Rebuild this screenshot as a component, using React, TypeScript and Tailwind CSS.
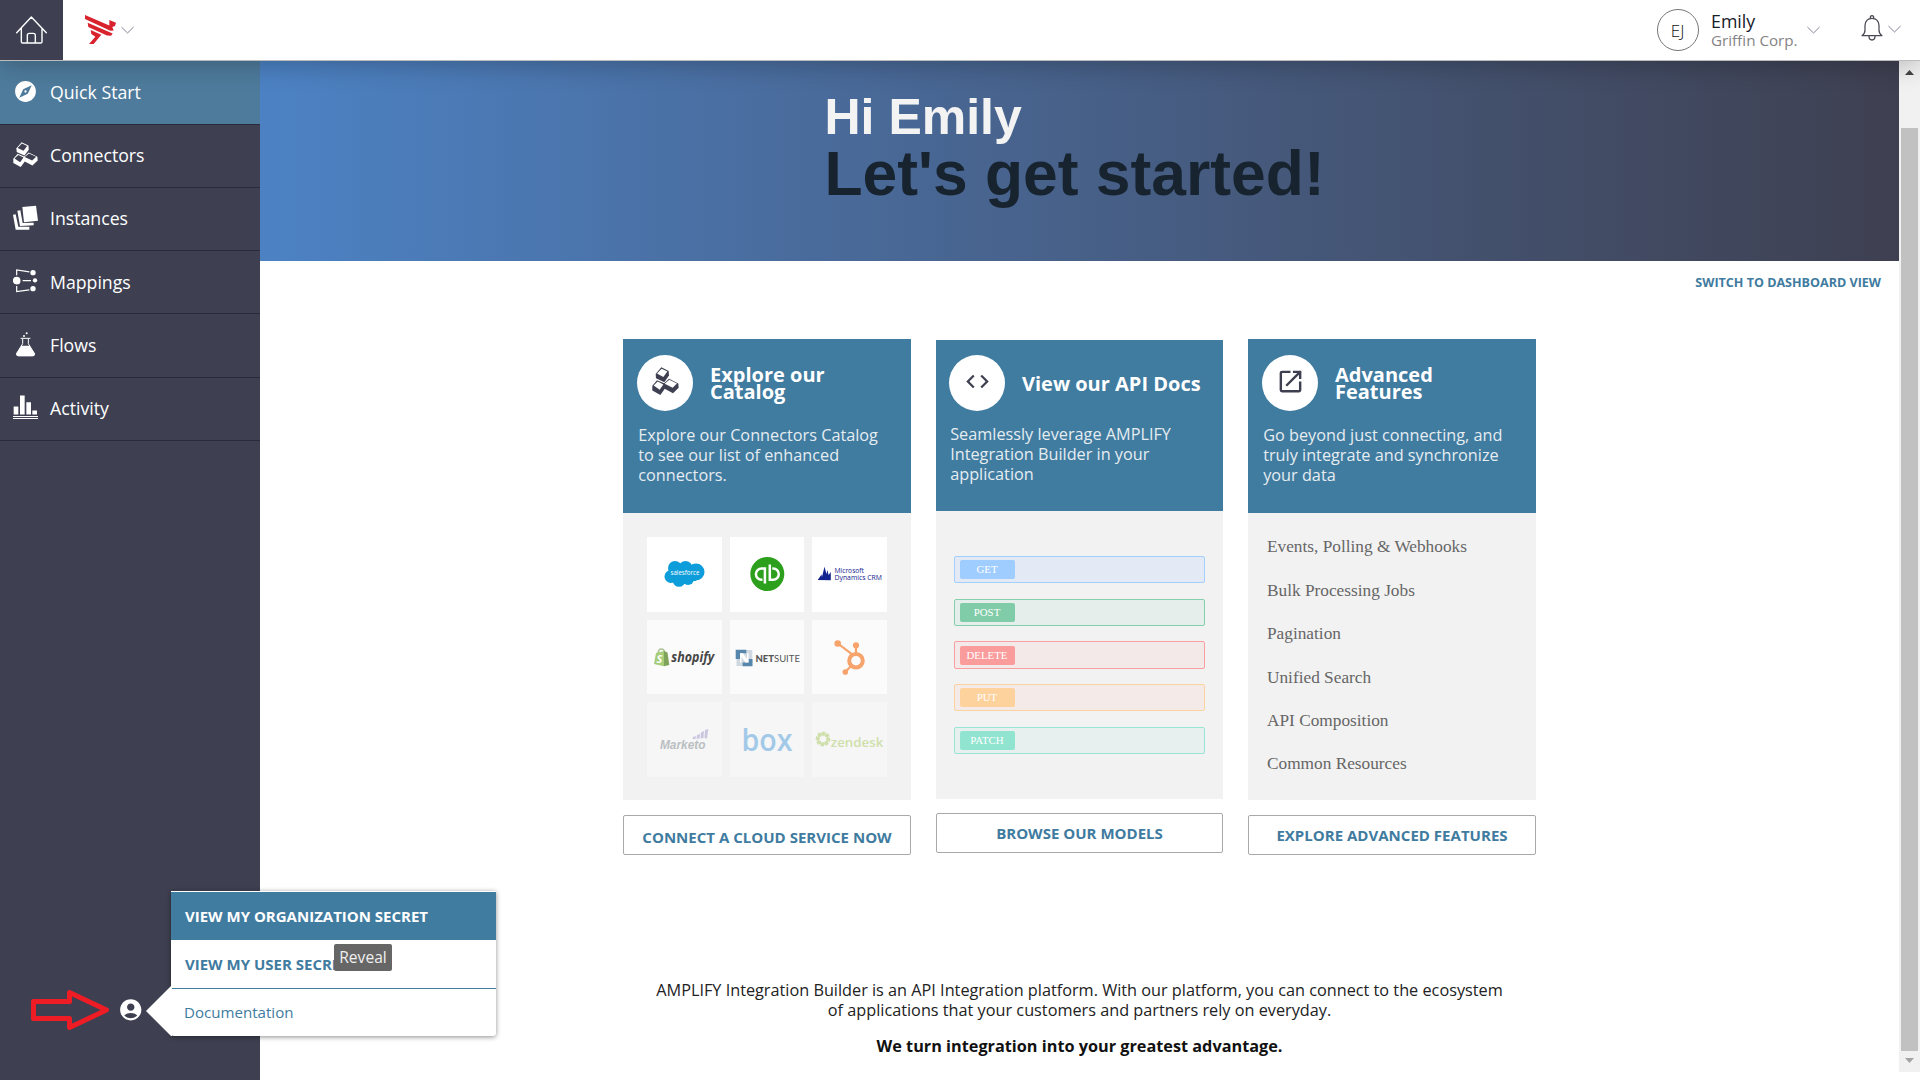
import React from "react";
import { MdAccountCircle, MdCode, MdExplore, MdOpenInNew } from "react-icons/md";

function CubesIcon({ w, h, face }: { w: number; h: number; face: string }) {
  return (
    <svg width={w} height={h} viewBox="125 110 81 85" preserveAspectRatio="none" fill="currentColor">
      <path d="M136 131 153 111 175 122 176 136 162 156 137 144Z" />
      <path d="M140 130 154 115 171 124 159 140Z" fill={face} />
      <path d="M126 167 140 150 163 160 165 174 150 195 126 181Z" />
      <path d="M130 166 142 154 159 163 148 179Z" fill={face} />
      <path d="M160 161 176 146 204 160 205 173 188 190 163 176Z" />
      <path d="M163 161 177 149 200 160 187 173Z" fill={face} />
    </svg>
  );
}

function InstancesIcon() {
  return (
    <svg width="25" height="25" viewBox="39 616 75 75" fill="currentColor">
      <path d="M67 622 108 618 114 663 72 668Z" />
      <path d="M52 633 61 632 68 670 101 669 101 677 60 679Z" />
      <path d="M39 645 47 644 55 681 88 681 88 690 47 690Z" />
    </svg>
  );
}

function MappingsIcon() {
  return (
    <svg width="25" height="25" viewBox="39 80 75 75" fill="currentColor" stroke="none">
      <circle cx="50" cy="118" r="11.5" />
      <circle cx="99" cy="94" r="8" />
      <circle cx="105" cy="117" r="6.5" />
      <circle cx="99" cy="142" r="8" />
      <path d="M50 102V86L88 91.500M68 118H93M50 134V151L88 145.500" fill="none" stroke="currentColor" strokeWidth="3.6" />
    </svg>
  );
}

function FlowsIcon() {
  return (
    <svg width="25" height="25" viewBox="39 275 75 75" fill="currentColor">
      <circle cx="72" cy="287" r="3" />
      <circle cx="80" cy="279" r="3" />
      <path d="M62 294H91M68 295V310L51 338Q48 346 56 346H97Q106 346 102 338L85 310V295" fill="none" stroke="currentColor" strokeWidth="3" />
      <path d="M64 316H89L104 339Q106 348 98 348H56Q47 348 49 339Z" />
    </svg>
  );
}

function ActivityIcon() {
  return (
    <svg width="25" height="25" viewBox="39 466.500 75 75" fill="currentColor">
      <path d="M41 501h14v24H41zM60 468h14v57H60zM79 488h14v37H79zM97 513h14v12H97zM39 529.500h75v3H39zM39 535.500h75v3H39z" />
    </svg>
  );
}

function Chevron() {
  return (
    <svg width="13" height="8" viewBox="0 0 13 8" fill="none" stroke="#85859a" strokeWidth="1">
      <path d="M.4 1 6.500 7 12.600 1" />
    </svg>
  );
}

const NAV: { label: string; icon: React.ReactNode; cls: string; text: string }[] = [
  { label: "Quick Start", icon: <MdExplore size={25} />, cls: "h-16 bg-[#4e7b9c]", text: "-mt-px" },
  { label: "Connectors", icon: <CubesIcon w={25} h={25} face="#3e4051" />, cls: "h-[63px]", text: "-mt-[3px]" },
  { label: "Instances", icon: <InstancesIcon />, cls: "h-[63px]", text: "-mt-[3px]" },
  { label: "Mappings", icon: <MappingsIcon />, cls: "h-[63px]", text: "-mt-px" },
  { label: "Flows", icon: <FlowsIcon />, cls: "h-16", text: "-mt-px" },
  { label: "Activity", icon: <ActivityIcon />, cls: "h-[63px]", text: "-mt-[3px]" },
];

const SANS = "font-['Open_Sans',sans-serif]";

function Header() {
  return (
    <header className="relative z-10 flex h-[61px] shrink-0 border-b border-[#bcbcbc] bg-white shadow-[0_4px_26px_rgba(0,0,0,0.24)]">
      <div className="flex w-[63px] items-center justify-center bg-[#3e4051]">
        <svg width="33" height="30" viewBox="45 43 99 90" fill="none" stroke="#fff" strokeWidth="4.200" strokeLinecap="round" strokeLinejoin="round">
          <path d="M50 96 94 49 139 96M64 84V123Q64 127 68 127H122Q126 127 126 123V84M82 127V104Q82 98 88 98H100Q106 98 106 104V127" />
        </svg>
      </div>
      <div className="flex items-center pl-[22px]">
        <svg width="31" height="29.500" viewBox="255 47 93 88" fill="#d8232f">
          <path d="M255 47 328 78 328 62 348 70 345 80 337 83 341 93 331 94 255 59Z" />
          <path d="M263 70 338 102 333 109 321 108 265 83Z" />
          <path d="M272 92 304 106 281 134 267 134 286 112 274 104Z" />
        </svg>
        <div className="ml-[5px]"><Chevron /></div>
      </div>
      <div className="ml-auto flex items-center pr-[19px]">
        <div className="flex h-[42px] w-[42px] items-center justify-center rounded-full border border-[#777] text-[17px] font-light text-[#111]">
          <span className="leading-none">EJ</span>
        </div>
        <div className="ml-[12.4px] mt-px w-[96px] whitespace-nowrap">
          <div className="text-[17.8px] leading-[19px] text-[#16202a]">Emily</div>
          <div className="text-[15.2px] leading-[19px] text-[#848484]">Griffin Corp.</div>
        </div>
        <Chevron />
        <svg className="-mt-[5px] ml-[41px]" width="22" height="26" viewBox="783 44 64 78" fill="none" stroke="#4a4a55" strokeWidth="3.800" strokeLinejoin="round">
          <path d="M785 106Q794 100 794 90V75Q796 54 815 54Q834 54 836 75V90Q836 100 845 106ZM806 108Q806 119 815 119Q824 119 824 108M810 54Q809 46 815 46Q821 46 820 54" />
        </svg>
        <div className="-mt-[2px] ml-[5px]"><Chevron /></div>
      </div>
    </header>
  );
}

function Sidebar() {
  return (
    <nav className="w-[260px] shrink-0 bg-[#3e4051] text-white">
      {NAV.map((n) => (
        <div key={n.label} className={`flex items-center border-b border-[#292b3b] pl-[13px] ${n.cls}`}>
          <span className="-mt-[3px] w-[25px]">{n.icon}</span>
          <span className={`ml-3 text-[17.7px] leading-6 ${n.text}`}>{n.label}</span>
        </div>
      ))}
    </nav>
  );
}

function Salesforce() {
  return (
    <svg viewBox="0 0 74.67 74.67">
      <g fill="#0d9dda">
        <circle cx="28" cy="31" r="7" /><circle cx="38.500" cy="31" r="7" /><circle cx="49" cy="35" r="8.500" />
        <circle cx="24" cy="39.500" r="6.500" /><circle cx="32" cy="43.500" r="6.300" /><circle cx="41" cy="42" r="6" />
        <rect x="25" y="30" width="24" height="14" />
      </g>
      <text x="23.500" y="38" fontSize="6.500" fill="#fff" textLength="29" lengthAdjust="spacingAndGlyphs">salesforce</text>
    </svg>
  );
}
function QuickBooks() {
  return (
    <svg viewBox="0 0 74.67 74.67">
      <circle cx="37.300" cy="37" r="17" fill="#2ca01c" />
      <path d="M34.900 31.400H31.600a5.700 5.700 0 0 0 0 11.400h.8M34.900 30.200V46.500M39.800 27.500V42.800H43.100a5.700 5.700 0 0 0 0-11.400h-.8" fill="none" stroke="#fff" strokeWidth="2.500" />
    </svg>
  );
}
function Dynamics() {
  return (
    <svg viewBox="0 0 74.67 74.67" fill="#12228f">
      <path d="M5.700 43 9.500 37.500 10 40 12.500 29.700 14.500 37 15.500 33 16.500 38 18.800 35V43.300Z" />
      <text x="22.500" y="36" fontSize="7.500" textLength="29.500" lengthAdjust="spacingAndGlyphs">Microsoft</text>
      <text x="22.500" y="43.200" fontSize="7.500" textLength="47.500" lengthAdjust="spacingAndGlyphs">Dynamics CRM</text>
    </svg>
  );
}
function Shopify() {
  return (
    <svg viewBox="0 0 74.67 74.67">
      <path d="M11 33Q12 28.500 14.500 29Q17 29 17.500 32" fill="none" stroke="#a9bf91" strokeWidth="1.500" />
      <path d="M9 33 17 31V46.200L7 44Z" fill="#a7cd78" />
      <path d="M17 31 20.500 32.500 22.300 45 17 46.200Z" fill="#80a35c" />
      <text x="9.500" y="43" fontSize="11" fontWeight="700" fontStyle="italic" fill="#fff">S</text>
      <text x="24.300" y="42.500" fontSize="14.500" fontWeight="700" fontStyle="italic" fill="#464646" textLength="43" lengthAdjust="spacingAndGlyphs">shopify</text>
    </svg>
  );
}
function NetSuite() {
  return (
    <svg viewBox="0 0 74.67 74.67">
      <path d="M9 30H22.300V43H9Z" fill="#cfd8e1" />
      <path d="M6.500 36H12.500V46H6.500Z" fill="#cfd8e1" />
      <path d="M5.700 29.700H16.300V33.200H10V39H5.700ZM12.500 42.500H18.500V39H22.500V46.300H12.500Z" fill="#5686ac" />
      <path d="M10 33.200H13L17 39V33.200H18.500V42.500H15.500L11.500 37V42.500H10Z" fill="#fff" />
      <text x="25.400" y="41.700" fontSize="9" fill="#555" fontFamily="Lato, sans-serif" textLength="44.500" lengthAdjust="spacingAndGlyphs">
        <tspan fontWeight="900">NET</tspan>SUITE
      </text>
    </svg>
  );
}
function HubSpot() {
  return (
    <svg viewBox="0 0 74.67 74.67" fill="#f7a36c" stroke="#f7a36c">
      <circle cx="25.700" cy="23.500" r="3.300" stroke="none" />
      <circle cx="44" cy="25.300" r="3.100" stroke="none" />
      <circle cx="33.300" cy="52" r="2.800" stroke="none" />
      <circle cx="44" cy="40.700" r="6.800" fill="none" strokeWidth="4" />
      <path d="M25.700 23.500 39.500 34M44 25.300V34M33.300 52 39 46" fill="none" strokeWidth="2.200" />
    </svg>
  );
}
function Marketo() {
  return (
    <svg viewBox="0 0 74.67 74.67">
      <path d="M46 35 49 34 48.500 37H45.500ZM50 33 53 32 52.500 36.500 49.500 37ZM54 30.500 57 29 56.500 36 53.500 36.500ZM58 28 61.300 27 60 36.500 57.500 36Z" fill="#cbc6e0" />
      <text x="13" y="47" fontSize="13.500" fontWeight="700" fontStyle="italic" fontFamily="Liberation Sans, sans-serif" fill="#babec2" textLength="45.500" lengthAdjust="spacingAndGlyphs">Marketo</text>
    </svg>
  );
}
function Box() {
  return (
    <svg viewBox="0 0 74.67 74.67">
      <text x="11.500" y="49" fontSize="31" fontWeight="600" fill="#a3c9e8" textLength="51" lengthAdjust="spacingAndGlyphs">box</text>
    </svg>
  );
}
function Zendesk() {
  return (
    <svg viewBox="0 0 74.67 74.67" fill="#cfdfab">
      {[0, 45, 90, 135, 180, 225, 270, 315].map((a) => (
        <path key={a} d="M8.500 33 10.500 29.500 14 30.200 12 34Z" transform={`rotate(${a} 11 37)`} />
      ))}
      <text x="18.800" y="45.300" fontSize="13" fontWeight="600" textLength="52.500" lengthAdjust="spacingAndGlyphs">zendesk</text>
    </svg>
  );
}

const TILES: [string, React.ReactNode][] = [
  ["bg-white", <Salesforce />], ["bg-white", <QuickBooks />], ["bg-white", <Dynamics />],
  ["bg-[#fbfbfb]", <Shopify />], ["bg-[#fbfbfb]", <NetSuite />], ["bg-[#fbfbfb]", <HubSpot />],
  ["bg-[#f6f6f6]", <Marketo />], ["bg-[#f6f6f6]", <Box />], ["bg-[#f6f6f6]", <Zendesk />],
];

const VERBS = [
  { name: "GET", row: "border-[#a3cffc] bg-[#e3eaf5]", tag: "bg-[#9fcdff]" },
  { name: "POST", row: "border-[#86cfad] bg-[#e5eeea]", tag: "bg-[#80cba8]" },
  { name: "DELETE", row: "border-[#fa9f9f] bg-[#f4e9e9]", tag: "bg-[#fb9c9c]" },
  { name: "PUT", row: "border-[#fcd3a0] bg-[#f4ebe9]", tag: "bg-[#fdd29c]" },
  { name: "PATCH", row: "border-[#97e5d3] bg-[#e7f0ee]", tag: "bg-[#90e4d0]" },
];

const FEATURES = ["Events, Polling & Webhooks", "Bulk Processing Jobs", "Pagination", "Unified Search", "API Composition", "Common Resources"];

function CardHead({ icon, title, text, cls, textCls }: { icon: React.ReactNode; title: string[]; text: string[]; cls: string; textCls: string }) {
  return (
    <div className={`bg-[#407ba0] ${cls}`}>
      <div className="flex h-14 items-center">
        <div className="flex h-14 w-14 shrink-0 items-center justify-center rounded-full bg-white text-[#3e4051]">{icon}</div>
        <div className="ml-[17px] text-[20px] leading-[17px] font-bold whitespace-nowrap text-white">
          {title.map((t) => <div key={t}>{t}</div>)}
        </div>
      </div>
      <div className={`pl-[1.2px] text-[16.25px] leading-5 whitespace-nowrap text-[#e6edf1] ${textCls}`}>
        {text.map((t) => <div key={t}>{t}</div>)}
      </div>
    </div>
  );
}

function CardButton({ label, cls }: { label: string; cls: string }) {
  return (
    <div className={`flex h-10 items-center justify-center rounded-[2px] border border-[#a9a9a9] bg-white text-[15.04px] leading-5 font-bold text-[#407ba0] ${cls}`}>
      {label}
    </div>
  );
}

function Cards() {
  return (
    <div className="flex h-[640.7px] items-start pl-[363px]">
      <div className="w-72">
        <CardHead
          cls="h-[174px] pt-4 pl-[14px]"
          textCls="mt-[13.6px]"
          icon={<span className="-mt-1"><CubesIcon w={27} h={28} face="#fff" /></span>}
          title={["Explore our", "Catalog"]}
          text={["Explore our Connectors Catalog", "to see our list of enhanced", "connectors."]}
        />
        <div className="grid h-[287px] auto-rows-[74.67px] grid-cols-3 gap-2 bg-[#f2f2f2] p-6">
          {TILES.map(([bg, logo], i) => <div key={i} className={bg}>{logo}</div>)}
        </div>
        <CardButton label="CONNECT A CLOUD SERVICE NOW" cls="mt-[15px] pt-[3px]" />
      </div>

      <div className="mt-px ml-[25px] w-[287px]">
        <CardHead
          cls="h-[171px] pt-[15px] pl-[13px]"
          textCls="mt-[12.6px]"
          icon={<span className="-mt-1"><MdCode size={27} /></span>}
          title={["View our API Docs"]}
          text={["Seamlessly leverage AMPLIFY", "Integration Builder in your", "application"]}
        />
        <div className="flex h-72 flex-col gap-[15.4px] bg-[#f2f2f2] pt-[45px] pr-[18px] pl-[18px] font-['Liberation_Serif',serif]">
          {VERBS.map((v) => (
            <div key={v.name} className={`flex h-[27.3px] items-center rounded-[2px] border pl-[4.5px] ${v.row}`}>
              <div className={`w-[55px] rounded-[2px] text-center text-[10.85px] leading-[19px] text-white ${v.tag}`}>{v.name}</div>
            </div>
          ))}
        </div>
        <CardButton label="BROWSE OUR MODELS" cls="mt-[14px] pb-px" />
      </div>

      <div className="ml-[25px] w-72">
        <CardHead
          cls="h-[174px] pt-4 pl-[14px]"
          textCls="mt-[13.6px]"
          icon={<span className="-mt-1"><MdOpenInNew size={29} /></span>}
          title={["Advanced", "Features"]}
          text={["Go beyond just connecting, and", "truly integrate and synchronize", "your data"]}
        />
        <div className="h-[287px] bg-[#f2f2f2] pt-[12.4px] pl-[19px] font-['Liberation_Serif',serif] text-[17.3px] leading-[43.4px] text-[#666]">
          {FEATURES.map((f) => <div key={f}>{f}</div>)}
        </div>
        <CardButton label="EXPLORE ADVANCED FEATURES" cls="mt-[15px]" />
      </div>
    </div>
  );
}

function AccountMenu() {
  return (
    <div className="absolute top-[891px] left-[171px] z-20 h-[145px] w-[325px] rounded-b-[3px] bg-white pt-px shadow-[0_1px_5px_rgba(0,0,0,0.45)]">
      <svg className="absolute top-[94px] -left-[25px]" width="26" height="52" viewBox="0 0 26 52" fill="#fff">
        <path d="M0 26 25 1H26V51H25Z" />
      </svg>
      <div className="h-12 bg-[#407ba0] pl-[14px] text-[15px] leading-[49px] font-bold text-white">VIEW MY ORGANIZATION SECRET</div>
      <div className="h-[49px] border-b border-[#407ba0] pl-[14px] text-[15px] leading-[48px] font-bold text-[#407ba0]">VIEW MY USER SECRET</div>
      <div className="pl-[13px] text-[15.1px] leading-[46px] text-[#407ba0]">Documentation</div>
      <div className="absolute top-[53px] left-[163px] h-[27px] w-[58px] rounded-[2px] bg-[#666] text-center text-[15.6px] leading-[26px] text-[#f0f0f0]">Reveal</div>
    </div>
  );
}

export default function App() {
  return (
    <div className={`relative flex h-[1080px] w-[1920px] flex-col overflow-hidden bg-white ${SANS}`}>
      <Header />
      <div className="flex flex-1">
        <Sidebar />
        <main className="w-[1639px]">
          <div className="h-[200px] bg-linear-to-r from-[#4c82c4] to-[#3e4051] pt-[27.7px] pl-[564.5px] font-['Liberation_Sans',sans-serif] font-bold whitespace-nowrap">
            <div className="text-[50px] leading-[56px] text-[#f3f3f3]">Hi Emily</div>
            <div className="text-[62.4px] leading-[57.2px] text-[#172430]">Let's get started!</div>
          </div>
          <div className="h-[78px] pt-[12px] pr-[18px] text-right text-[12.55px] leading-5 font-bold text-[#407ba0]">SWITCH TO DASHBOARD VIEW</div>
          <Cards />
          <div className="text-center text-[16.25px] leading-5 whitespace-nowrap text-[#222]">
            <p>AMPLIFY Integration Builder is an API Integration platform. With our platform, you can connect to the ecosystem</p>
            <p>of applications that your customers and partners rely on everyday.</p>
            <p className="mt-4 font-bold text-[#111]">We turn integration into your greatest advantage.</p>
          </div>
        </main>
        <div className="flex h-[1011px] w-[21px] flex-col items-center bg-[#f1f1f1]">
          <svg className="mt-[9px] shrink-0" width="9" height="5" viewBox="0 0 9 5"><path d="M0 5 4.500 0 9 5Z" fill="#444" /></svg>
          <div className="mt-[53px] h-[923px] w-[17px] shrink-0 bg-[#c1c1c1]" />
          <svg className="mt-[7px] shrink-0" width="9" height="5" viewBox="0 0 9 5"><path d="M0 0 4.500 5 9 0Z" fill="#a3a3a3" /></svg>
        </div>
      </div>

      <MdAccountCircle size={25.5} className="absolute top-[997px] left-[117.5px] text-white" />
      <svg className="absolute top-[988px] left-[29px]" width="82" height="44" viewBox="29 988 82 44" fill="none" stroke="#ee1c25" strokeWidth="5" strokeLinejoin="round">
        <path d="M33.500 1001.500H69.500V992.500L106.500 1010 69.500 1027.500V1018.500H33.500Z" />
      </svg>
      <AccountMenu />
    </div>
  );
}
